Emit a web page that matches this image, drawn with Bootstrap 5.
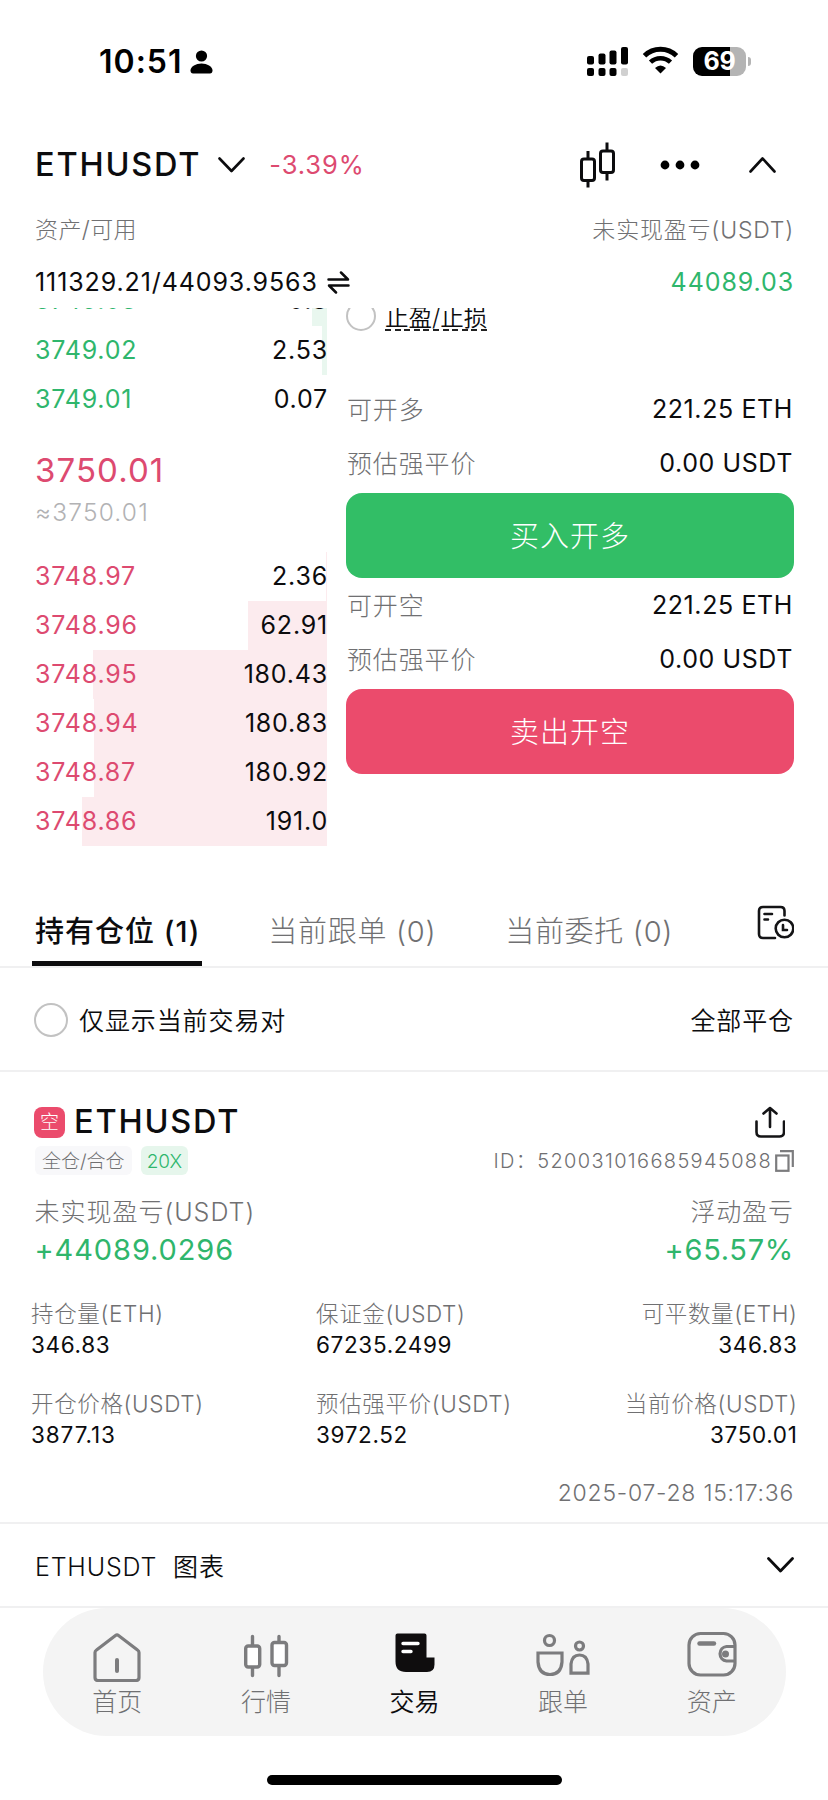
<!DOCTYPE html>
<html lang="zh-CN">
<head>
<meta charset="utf-8">
<meta name="viewport" content="width=device-width, initial-scale=1">
<title>ETHUSDT</title>
<link href="https://cdn.jsdelivr.net/npm/bootstrap@5.3.0/dist/css/bootstrap.min.css" rel="stylesheet">
<script src="https://cdn.jsdelivr.net/npm/bootstrap@5.3.0/dist/js/bootstrap.bundle.min.js"></script>
<style>
:root{--up:#2fb66c;--down:#dd4a70;--ink:#0c0c0e;--mute:#707072;--hair:#f0f0f1}
body{font-family:Inter,"Noto Sans CJK SC",sans-serif;font-size:25px;font-weight:400;letter-spacing:.9px;color:var(--ink);background:#fff;line-height:1;white-space:nowrap}
svg{display:block;flex:none}
.px-page{padding-left:35px;padding-right:34px}
.mute{color:var(--mute);font-weight:300}
.thin{font-weight:350}
.up{color:var(--up)}.down{color:var(--down)}
.statusbar{height:124px;padding:0 77px 0 99px}
.clock{font-size:32px;font-weight:600;letter-spacing:1px;color:#000}
.batt{width:53px;height:29px;border-radius:9px;background:linear-gradient(90deg,#000 70%,#b4b4b4 70%);color:#fff;font-size:25px;font-weight:700;letter-spacing:-.3px}
.batt-tip{width:3px;height:9px;border-radius:0 4px 4px 0;background:#b4b4b4;margin-left:2px}
.pairbar{height:82px}
.pair{font-size:32.5px;font-weight:500;letter-spacing:1.8px;padding-top:1px}
.lbl-row{height:48px;font-size:23px;letter-spacing:.8px}
.val-row{height:54px;padding-top:2px}
.trade{height:588px;padding-left:34px;padding-right:34px}
.book{width:293px;margin-top:-31.5px}
.lv{height:49px;padding-left:1px;letter-spacing:.8px;background:linear-gradient(var(--c),var(--c)) right/var(--w) 100% no-repeat}
.lv>:last-child{margin-right:-1px}
.lv-cut{padding-bottom:2px}
.bid{--c:#e9f7ef}.ask{--c:#fcebee}
.last-px{font-size:33px;letter-spacing:1.1px;height:44px;line-height:44px;margin-top:24px;padding-left:1px}
.idx-px{font-size:24.5px;letter-spacing:1.2px;color:#b2b2b4;font-weight:300;height:42px;line-height:41px;margin-bottom:18px;padding-left:1px}
.form-side{width:448px}
.kv{height:54px;padding:1px 1px 0;letter-spacing:.6px}
.kv .mute{letter-spacing:.85px;padding-top:1px}
.ring{border:2.5px solid #c2c2c2;border-radius:50%;flex:none}
.tpsl{height:30px;margin-top:-7px}
.dash{font-size:23.5px;letter-spacing:0;line-height:24px;padding-bottom:1px;background:repeating-linear-gradient(90deg,#222 0 6px,transparent 6px 9.6px) bottom/100% 2px no-repeat}
.btn-trade{height:85px;border:0;border-radius:16px;color:#fff;font-size:29px;font-weight:300;letter-spacing:1px;padding:2px 0 0}
.btn-buy{background:#32be66}.btn-sell{background:#eb4b6c}
.btn-buy:hover,.btn-sell:hover{color:#fff}
.tabs-row{height:72px;border-bottom:2px solid var(--hair);font-size:29px;letter-spacing:.7px}
.tab-on{font-weight:500;letter-spacing:1px;height:70px}
.tab-on::after{content:"";position:absolute;left:-3px;right:-2px;bottom:.5px;height:4.5px;background:var(--ink)}
.filter-row{height:104px;border-bottom:2px solid var(--hair);padding-top:2px}
.filter-row .txt{padding-top:2px}
.side-tag{width:31px;height:31px;border-radius:8px;background:#eb4b6c;color:#fff;font-size:19px;font-weight:300;letter-spacing:0}
.chip{height:29px;border-radius:6px}
.mono-id{font-size:20px;letter-spacing:1.35px}
.cells{padding-left:31px;padding-right:30.5px}
.cell-l{font-size:22.5px;letter-spacing:.65px;height:30px;line-height:31px}
.cell-v{font-size:22.5px;letter-spacing:.65px;height:34px;line-height:34px}
.big-v{font-size:29px;letter-spacing:.9px;height:40px;line-height:40px}
.chart-row{height:84px;border-bottom:2px solid var(--hair);padding-top:3px}
.dock{width:743px;height:128px;margin-left:43px;border-radius:64px;background:#f4f4f4}
.dock a{color:var(--mute);font-weight:300;text-decoration:none;padding-top:20px;letter-spacing:0}
.dock a.on{color:var(--ink);font-weight:350}
.dock a span{height:38px;line-height:38px;margin-top:1px}
.home-bar{width:295px;height:10px;border-radius:5px;background:#000;margin:39px 0 0 267px}
</style>
</head>
<body>
<header>
  <div class="statusbar d-flex align-items-center justify-content-between">
    <div class="d-flex align-items-center">
      <span class="clock">10:51</span>
      <svg width="23" height="24" viewBox="0 0 23 24" style="margin-left:7px"><circle cx="11.5" cy="6" r="5.6"/><path d="M.5 20.5C.5 16.500 6 13.600 11.500 13.600S22.500 16.500 22.500 20.500C22.500 22.500 21.500 23.500 20 23.500H3C1.500 23.500.5 22.500.5 20.500Z"/></svg>
    </div>
    <div class="d-flex align-items-center" style="margin-top:-2px">
      <svg width="42" height="29" viewBox="0 0 42 29"><rect x="0" y="9" width="7" height="8.500" rx="2"/><rect x="11.500" y="6.500" width="7" height="11" rx="2"/><rect x="22.500" y="3.500" width="7" height="14" rx="2"/><rect x="34" y="0" width="7" height="17.500" rx="2"/><rect x="0" y="21" width="7" height="8" rx="2"/><rect x="11.500" y="21" width="7" height="8" rx="2"/><rect x="22.500" y="21" width="7" height="8" rx="2"/><rect x="34" y="21" width="7" height="8" rx="2" fill="#d0d0d0"/></svg>
      <svg width="37" height="28" viewBox="0 0 37 28" style="margin:0 14px 2px 13px"><path d="M2.500 9.800A23 23 0 0 1 34.500 9.800" fill="none" stroke="#000" stroke-width="5"/><path d="M8.500 16.200A14.500 14.500 0 0 1 28.500 16.200" fill="none" stroke="#000" stroke-width="4.600"/><path d="M18.500 27.500L13 22Q18.500 17 24 22Z"/></svg>
      <div class="batt d-flex align-items-center justify-content-center">69</div><div class="batt-tip"></div>
    </div>
  </div>
  <div class="pairbar px-page d-flex align-items-center justify-content-between">
    <div class="d-flex align-items-center">
      <span class="pair">ETHUSDT</span>
      <svg width="27" height="16" viewBox="0 0 27 16" style="margin-left:17px"><path d="M1.500 1.500L13.500 14L25.500 1.500" fill="none" stroke="#0c0c0e" stroke-width="2.600" stroke-linecap="round" stroke-linejoin="round"/></svg>
      <span class="down" style="margin-left:24px;font-size:25.5px">-3.39%</span>
    </div>
    <div class="d-flex align-items-center" style="margin-right:18px">
      <svg width="35" height="46" viewBox="0 0 35 46" fill="none" stroke="#0c0c0e" stroke-width="3"><rect x="1.500" y="17" width="13" height="21.500" rx="2.500"/><path d="M8 9V17M8 38.500V45.500M27 .5V8M27 31V38.500"/><rect x="20.500" y="9" width="13" height="21.500" rx="2.500"/></svg>
      <svg width="40" height="10" viewBox="0 0 40 10" style="margin:0 49px 0 45px"><circle cx="5" cy="5" r="4.400"/><circle cx="20" cy="5" r="4.400"/><circle cx="35" cy="5" r="4.400"/></svg>
      <svg width="27" height="16" viewBox="0 0 27 16"><path d="M1.500 14.500L13.500 1.500L25.500 14.500" fill="none" stroke="#0c0c0e" stroke-width="2.600" stroke-linecap="round" stroke-linejoin="round"/></svg>
    </div>
  </div>
  <div class="lbl-row px-page mute d-flex align-items-center justify-content-between"><span style="letter-spacing:.4px">资产/可用</span><span>未实现盈亏(USDT)</span></div>
  <div class="val-row px-page d-flex align-items-center justify-content-between">
    <span class="d-flex align-items-center">111329.21/44093.9563
      <svg width="23" height="23" viewBox="0 0 23 23" style="margin-left:9px" fill="none" stroke="#0c0c0e" stroke-width="2.500" stroke-linecap="round" stroke-linejoin="round"><path d="M1.500 8.500H21L14 1.500M21.500 14.500H2L9 21.500"/></svg></span>
    <span class="up">44089.03</span>
  </div>
</header>

<main>
  <section class="trade d-flex justify-content-between overflow-hidden">
    <div class="book">
      <div class="lv lv-cut bid d-flex align-items-center justify-content-between" style="--w:15px"><span class="up">3749.03</span><span>0.8</span></div>
      <div class="lv bid d-flex align-items-center justify-content-between" style="--w:5px"><span class="up">3749.02</span><span>2.53</span></div>
      <div class="lv bid d-flex align-items-center justify-content-between" style="--w:0px"><span class="up">3749.01</span><span>0.07</span></div>
      <div class="last-px down">3750.01</div>
      <div class="idx-px">≈3750.01</div>
      <div class="lv ask d-flex align-items-center justify-content-between" style="--w:1px"><span class="down">3748.97</span><span>2.36</span></div>
      <div class="lv ask d-flex align-items-center justify-content-between" style="--w:79px"><span class="down">3748.96</span><span>62.91</span></div>
      <div class="lv ask d-flex align-items-center justify-content-between" style="--w:234px"><span class="down">3748.95</span><span>180.43</span></div>
      <div class="lv ask d-flex align-items-center justify-content-between" style="--w:233.5px"><span class="down">3748.94</span><span>180.83</span></div>
      <div class="lv ask d-flex align-items-center justify-content-between" style="--w:233.5px"><span class="down">3748.87</span><span>180.92</span></div>
      <div class="lv ask d-flex align-items-center justify-content-between" style="--w:245px"><span class="down">3748.86</span><span>191.0</span></div>
    </div>
    <div class="form-side">
      <div class="tpsl d-flex align-items-center"><span class="ring" style="width:30px;height:30px"></span><span class="dash thin" style="margin-left:9px;margin-top:4px">止盈/止损</span></div>
      <div class="kv d-flex align-items-center justify-content-between" style="margin-top:51px"><span class="mute">可开多</span><span>221.25 ETH</span></div>
      <div class="kv d-flex align-items-center justify-content-between"><span class="mute">预估强平价</span><span>0.00 USDT</span></div>
      <button class="btn btn-trade btn-buy w-100 d-block" style="margin-top:3px">买入开多</button>
      <div class="kv d-flex align-items-center justify-content-between"><span class="mute">可开空</span><span>221.25 ETH</span></div>
      <div class="kv d-flex align-items-center justify-content-between"><span class="mute">预估强平价</span><span>0.00 USDT</span></div>
      <button class="btn btn-trade btn-sell w-100 d-block" style="margin-top:3px">卖出开空</button>
    </div>
  </section>

  <nav class="tabs-row px-page d-flex align-items-center">
    <span class="tab-on position-relative d-flex align-items-center">持有仓位 (1)</span>
    <span class="mute" style="margin-left:68px">当前跟单 (0)</span>
    <span class="mute" style="margin-left:69px">当前委托 (0)</span>
    <svg class="ms-auto" width="37" height="35" viewBox="0 0 37 35" style="margin-top:-17px" fill="none" stroke="#141416" stroke-width="2.600" stroke-linecap="round"><path d="M18 33H6Q2 33 2 29V6Q2 2 6 2H23.500Q27.500 2 27.500 6V10.500M7.500 9H15M7.500 14.500H11"/><circle cx="27.500" cy="23.500" r="8.800"/><path d="M26 20V25H30"/></svg>
  </nav>
  <div class="filter-row px-page d-flex align-items-center justify-content-between thin">
    <label class="d-flex align-items-center"><span class="ring" style="width:34px;height:34px;margin-left:-1px"></span><span class="txt" style="margin-left:11px">仅显示当前交易对</span></label>
    <span class="txt">全部平仓</span>
  </div>

  <section style="padding-top:30px;padding-bottom:14px;border-bottom:2px solid var(--hair)">
    <div class="px-page d-flex align-items-center justify-content-between" style="height:40px">
      <div class="d-flex align-items-center"><span class="side-tag d-flex align-items-center justify-content-center" style="margin-left:-1px">空</span><span class="pair" style="margin-left:9px">ETHUSDT</span></div>
      <svg width="30" height="32" viewBox="0 0 30 32" style="margin-right:9px;margin-top:-1px" fill="none" stroke="#141416" stroke-width="2.600" stroke-linecap="round" stroke-linejoin="round"><path d="M15 21V2M8.500 7.500L15 2L21.500 7.500M1.500 15.500V26Q1.500 30.500 6 30.500H24.500Q29 30.500 29 26V15.500"/></svg>
    </div>
    <div class="px-page d-flex align-items-center justify-content-between mute" style="height:37px;font-size:19px;letter-spacing:0">
      <div class="d-flex align-items-center"><span class="chip d-flex align-items-center" style="background:#f8f8fa;padding:1px 7px 0">全仓/合仓</span><span class="chip up d-flex align-items-center" style="background:#e6f6ec;margin-left:9px;padding:1px 6px 0">20X</span></div>
      <div class="d-flex align-items-center mono-id">ID：520031016685945088<svg width="19" height="22" viewBox="0 0 19 22" style="margin-left:3px" fill="none" stroke="#7c7c7e" stroke-width="2.200"><rect x="1.200" y="5.500" width="12.300" height="15.300"/><path d="M5 1.200H17.800V17"/></svg></div>
    </div>
    <div class="px-page d-flex justify-content-between" style="margin-top:15px">
      <div style="margin-left:-.5px"><div class="mute" style="height:36px;line-height:37px;letter-spacing:1px">未实现盈亏(USDT)</div><div class="big-v up">+44089.0296</div></div>
      <div class="text-end"><div class="mute" style="height:36px;line-height:37px">浮动盈亏</div><div class="big-v up" style="letter-spacing:.7px">+65.57%</div></div>
    </div>
    <div class="cells d-flex justify-content-between" style="margin-top:28px">
      <div style="width:285px"><div class="cell-l mute">持仓量(ETH)</div><div class="cell-v">346.83</div></div>
      <div class="flex-grow-1"><div class="cell-l mute">保证金(USDT)</div><div class="cell-v">67235.2499</div></div>
      <div class="text-end"><div class="cell-l mute">可平数量(ETH)</div><div class="cell-v">346.83</div></div>
    </div>
    <div class="cells d-flex justify-content-between" style="margin-top:26px">
      <div style="width:285px"><div class="cell-l mute">开仓价格(USDT)</div><div class="cell-v" style="letter-spacing:.9px">3877.13</div></div>
      <div class="flex-grow-1"><div class="cell-l mute">预估强平价(USDT)</div><div class="cell-v">3972.52</div></div>
      <div class="text-end"><div class="cell-l mute">当前价格(USDT)</div><div class="cell-v">3750.01</div></div>
    </div>
    <div class="px-page mute text-end" style="margin-top:26px;height:30px;line-height:30px;font-size:23px;letter-spacing:.75px">2025-07-28 15:17:36</div>
  </section>
  <div class="chart-row px-page d-flex align-items-center justify-content-between">
    <span class="thin" style="padding-top:1px;letter-spacing:.8px">ETHUSDT<span style="margin-left:16px">图表</span></span>
    <svg width="27" height="16" viewBox="0 0 27 16" style="margin-top:-3px"><path d="M1.500 1.500L13.500 14L25.500 1.500" fill="none" stroke="#0c0c0e" stroke-width="2.800" stroke-linecap="round" stroke-linejoin="round"/></svg>
  </div>
</main>

<nav class="dock d-flex">
  <a href="#" class="d-flex flex-column align-items-center" style="flex:1 1 0">
    <svg width="50" height="54" viewBox="0 0 50 54" fill="none" stroke="#7c7c7e" stroke-width="3.200" stroke-linecap="round" stroke-linejoin="round"><path d="M3 24.500Q3 23 4.500 22L23.500 7.500Q25 6.400 26.500 7.500L45.500 22Q47 23 47 24.500V49.500Q47 52.500 44 52.500H6Q3 52.500 3 49.500Z"/><path d="M25 32V43" stroke-width="4"/></svg><span>首页</span></a>
  <a href="#" class="d-flex flex-column align-items-center" style="flex:1 1 0">
    <svg width="50" height="54" viewBox="0 0 50 54" fill="#fff" stroke="#7c7c7e" stroke-width="3.400" stroke-linecap="round"><path d="M11.500 8.500V47.500M38 8.500V47.500"/><rect x="4.700" y="18" width="14" height="21" rx="2.500"/><rect x="31" y="14.500" width="14.500" height="23" rx="2.500"/></svg><span>行情</span></a>
  <a href="#" class="on d-flex flex-column align-items-center" style="flex:1 1 0">
    <svg width="50" height="54" viewBox="0 0 50 54"><path d="M6.500 7.500Q6.500 5.500 8.500 5.500H35.500Q37.500 5.500 37.500 7.500V29.500H45.500V36.500Q45.500 44 38 44H17Q6.500 44 6.500 33.500Z" fill="#0f0d0e"/><path d="M14 15.500H29M14 23.500H22" stroke="#fff" stroke-width="3.400" stroke-linecap="round"/></svg><span>交易</span></a>
  <a href="#" class="d-flex flex-column align-items-center" style="flex:1 1 0">
    <svg width="56" height="54" viewBox="0 0 56 54" fill="none" stroke="#7c7c7e" stroke-width="3.200"><circle cx="14.500" cy="12.500" r="5"/><path d="M3 25H27V34Q26 46.500 15 46.500T3 34Z"/><circle cx="44.500" cy="18" r="4"/><path d="M36 45.200V36Q37 27 44.500 27T53 36V45.200Z"/></svg><span>跟单</span></a>
  <a href="#" class="d-flex flex-column align-items-center" style="flex:1 1 0">
    <svg width="50" height="54" viewBox="0 0 50 54" fill="none" stroke="#7c7c7e" stroke-width="3.200"><rect x="2" y="5.500" width="46" height="41.500" rx="11.500"/><path d="M12.500 15.500H27" stroke-width="4.400" stroke-linecap="round"/><path d="M48 18.500H39.500A7.300 7.300 0 0 0 39.500 33H48"/><circle cx="38.500" cy="26" r="3.500" fill="#7c7c7e" stroke="none"/></svg><span>资产</span></a>
</nav>
<div class="home-bar"></div>
</body>
</html>
